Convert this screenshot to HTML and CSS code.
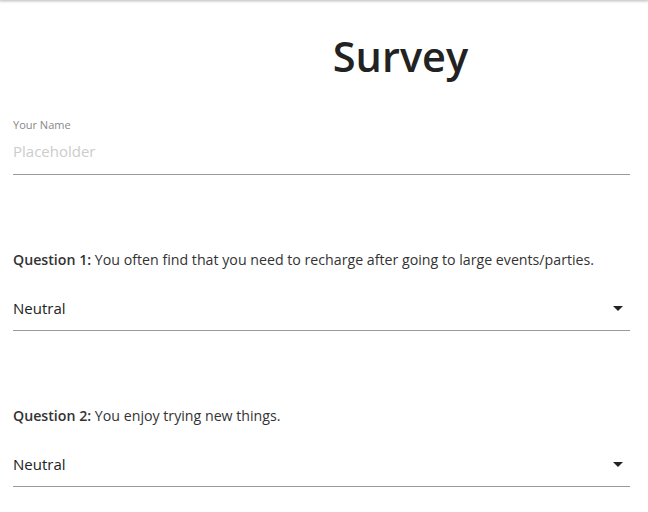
FILE: index.html
```html
<!DOCTYPE html>
<html>
<head>
<meta charset="utf-8">
<link rel="stylesheet" href="styles.css">
</head>
<body>
<div class="topbar"></div>
<main class="survey">
  <h1 class="title">Survey</h1>
  <div class="field">
    <label class="field-label">Your Name</label>
    <input class="text-input" type="text" placeholder="Placeholder">
  </div>
  <div class="question">
    <p class="question-text"><b>Question 1:</b> You often find that you need to recharge after going to large events/parties.</p>
    <div class="select">
      <span class="select-value">Neutral</span>
      <span class="select-arrow"></span>
    </div>
  </div>
  <div class="question">
    <p class="question-text"><b>Question 2:</b> You enjoy trying new things.</p>
    <div class="select">
      <span class="select-value">Neutral</span>
      <span class="select-arrow"></span>
    </div>
  </div>
</main>
</body>
</html>
```

FILE: styles.css
```css
* { box-sizing: border-box; }
html, body { margin: 0; padding: 0; background: #fff; }
body {
  font-family: "Open Sans", "Noto Sans", sans-serif;
  color: #222;
  overflow: hidden;
}
.topbar {
  height: 0;
  box-shadow: 0 0 3px 1px rgba(0,0,0,0.35);
}
.survey {
  padding: 0 18px 0 13px;
}
.title {
  margin: 0;
  padding: 29px 0 0 158px;
  text-align: center;
  font-size: 41.5px;
  font-weight: 600;
  line-height: 54px;
  color: #222;
}
.field {
  margin-top: 35px;
  display: flex;
  flex-direction: column;
}
.field-label {
  font-size: 11px;
  color: #888;
  line-height: 14px;
}
.text-input {
  border: 0;
  border-bottom: 1px solid #999;
  outline: none;
  padding: 9px 0 13px;
  font-family: inherit;
  font-size: 15px;
  line-height: 20px;
  color: #222;
  background: transparent;
}
.text-input::placeholder { color: #ccc; }
.question { margin-top: 75px; }
.question + .question { margin-top: 75px; }
.question-text {
  margin: 0;
  font-size: 14.2px;
  line-height: 20px;
  color: #333;
}
.question-text b { font-weight: 600; }
.select {
  margin-top: 28px;
  display: flex;
  align-items: center;
  justify-content: space-between;
  border-bottom: 1px solid #999;
  padding: 0 0 12px;
}
.select-value {
  font-size: 15px;
  line-height: 20px;
  color: #222;
}
.select-arrow {
  width: 0;
  height: 0;
  margin-right: 7px;
  border-left: 5px solid transparent;
  border-right: 5px solid transparent;
  border-top: 5px solid #222;
}
```
